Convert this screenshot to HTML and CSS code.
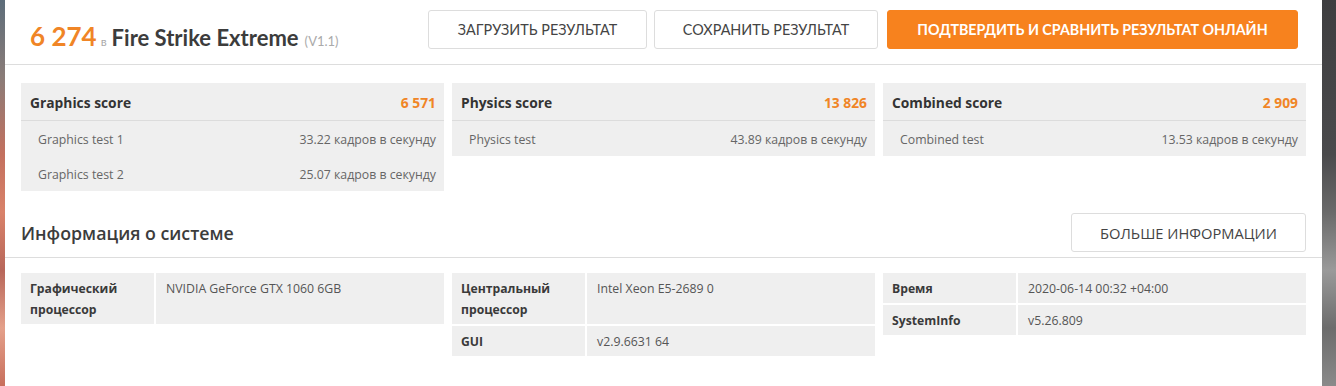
FILE: index.html
```html
<!DOCTYPE html>
<html>
<head>
  <title>Fire Strike Extreme result</title>
  <link rel="stylesheet" href="styles.css">
</head>
<body>
  <div class="backdrop">
    <div class="edge-left"></div>
    <div class="panel">
      <div class="result-header">
        <h1 class="result-title">
          <span class="main-score">6 274</span>
          <span class="in">в</span>
          <span class="test-name">Fire Strike Extreme</span>
          <span class="version">(V1.1)</span>
        </h1>
        <div class="actions">
          <button class="btn btn-load">ЗАГРУЗИТЬ РЕЗУЛЬТАТ</button>
          <button class="btn btn-save">СОХРАНИТЬ РЕЗУЛЬТАТ</button>
          <button class="btn btn-primary">ПОДТВЕРДИТЬ И СРАВНИТЬ РЕЗУЛЬТАТ ОНЛАЙН</button>
        </div>
      </div>

      <div class="scores">
        <div class="score-box">
          <div class="score-head"><span>Graphics score</span><span class="score-value">6 571</span></div>
          <div class="score-row"><span>Graphics test 1</span><span>33.22 кадров в секунду</span></div>
          <div class="score-row"><span>Graphics test 2</span><span>25.07 кадров в секунду</span></div>
        </div>
        <div class="score-box">
          <div class="score-head"><span>Physics score</span><span class="score-value">13 826</span></div>
          <div class="score-row"><span>Physics test</span><span>43.89 кадров в секунду</span></div>
        </div>
        <div class="score-box">
          <div class="score-head"><span>Combined score</span><span class="score-value">2 909</span></div>
          <div class="score-row"><span>Combined test</span><span>13.53 кадров в секунду</span></div>
        </div>
      </div>

      <div class="info-header">
        <h2>Информация о системе</h2>
        <button class="btn btn-more">БОЛЬШЕ ИНФОРМАЦИИ</button>
      </div>

      <div class="info">
        <div class="info-table">
          <div class="info-row"><div class="info-label">Графический процессор</div><div class="info-value">NVIDIA GeForce GTX 1060 6GB</div></div>
        </div>
        <div class="info-table">
          <div class="info-row"><div class="info-label">Центральный процессор</div><div class="info-value">Intel Xeon E5-2689 0</div></div>
          <div class="info-row"><div class="info-label">GUI</div><div class="info-value">v2.9.6631 64</div></div>
        </div>
        <div class="info-table">
          <div class="info-row"><div class="info-label">Время</div><div class="info-value">2020-06-14 00:32 +04:00</div></div>
          <div class="info-row"><div class="info-label">SystemInfo</div><div class="info-value">v5.26.809</div></div>
        </div>
      </div>
    </div>
    <div class="edge-right"></div>
  </div>
</body>
</html>
```

FILE: styles.css
```css
body {
  margin: 0;
  font-family: "Open Sans", "Noto Sans", sans-serif;
  color: #444;
  background: #fff;
}

.backdrop {
  display: flex;
  height: 386px;
  overflow: hidden;
}

.edge-left {
  width: 5px;
  flex-shrink: 0;
  background: linear-gradient(180deg, #5d6d7a 0%, #8a7c78 20%, #c3705e 40%, #d9826a 55%, #b8675a 70%, #e4a08a 85%, #c86f5c 100%);
}

.edge-right {
  flex: 1;
  background: linear-gradient(180deg, #3e3e40 0%, #4a4a4c 40%, #6a6a6a 55%, #9a9a9a 70%, #6c6c6c 85%, #8a8a8a 100%);
}

.panel {
  width: 1317px;
  flex-shrink: 0;
  background: #fff;
}

.result-header {
  display: flex;
  justify-content: space-between;
  align-items: center;
  padding: 10px 24px 15px 25px;
  border-bottom: 1px solid #ddd;
}

.result-title {
  margin: 13px 0 0;
  line-height: 1;
  font-family: Lato, sans-serif;
  font-weight: normal;
  display: flex;
  align-items: baseline;
  white-space: nowrap;
}

.main-score {
  color: #f08526;
  font-size: 26px;
  font-weight: bold;
}

.in {
  color: #aaa;
  font-size: 12px;
  margin: 0 5px 0 4px;
}

.test-name {
  color: #3c3c3c;
  font-size: 22px;
  font-weight: bold;
}

.version {
  color: #aaa;
  font-size: 13px;
  margin-left: 6px;
}

.actions {
  display: flex;
  gap: 7px;
}

.btn {
  height: 39px;
  padding: 0;
  border: 1px solid #ddd;
  border-radius: 3px;
  background: #fff;
  color: #444;
  font-family: Lato, sans-serif;
  font-size: 14.4px;
  cursor: pointer;
}

.btn-load {
  width: 219px;
}

.btn-save {
  width: 224px;
  margin-right: 2px;
}

.btn-primary {
  width: 411px;
  background: #f7821e;
  border-color: #f7821e;
  color: #fff;
  font-weight: bold;
  font-size: 14.3px;
}

.scores {
  display: grid;
  grid-template-columns: repeat(3, 1fr);
  gap: 8px;
  padding: 18px 16px 0;
  align-items: start;
}

.score-box {
  background: #efefef;
}

.score-head {
  display: flex;
  justify-content: space-between;
  align-items: center;
  height: 38px;
  padding: 1px 8px 0 9px;
  box-sizing: border-box;
  border-bottom: 1px solid #dcdcdc;
  font-size: 13.8px;
  font-weight: bold;
  color: #333;
}

.score-value {
  color: #f08526;
}

.score-row {
  display: flex;
  justify-content: space-between;
  align-items: center;
  height: 34px;
  padding: 1px 8px 0 17px;
  font-size: 12.3px;
  color: #666;
}

.info-header {
  display: flex;
  justify-content: space-between;
  align-items: center;
  padding: 22px 16px 5px 16px;
  border-bottom: 1px solid #ddd;
}

.info-header h2 {
  margin: 0;
  font-size: 17.8px;
  font-weight: 600;
  color: #3c3c3c;
}

.btn-more {
  width: 235px;
  font-family: "Open Sans", sans-serif;
  font-size: 14.7px;
}

.info {
  display: grid;
  grid-template-columns: repeat(3, 1fr);
  gap: 8px;
  padding: 15px 16px 0;
  align-items: start;
}

.info-table {
  display: flex;
  flex-direction: column;
  gap: 2px;
}

.info-row {
  display: flex;
  gap: 2px;
}

.info-label {
  width: 133px;
  flex-shrink: 0;
  background: #efefef;
  padding: 5px 9px 4px;
  box-sizing: border-box;
  font-size: 12.2px;
  line-height: 21px;
  font-weight: bold;
  color: #3a3a3a;
}

.info-value {
  flex: 1;
  background: #efefef;
  padding: 5px 11px 4px 10px;
  font-size: 12.3px;
  line-height: 21px;
  color: #555;
}
```
